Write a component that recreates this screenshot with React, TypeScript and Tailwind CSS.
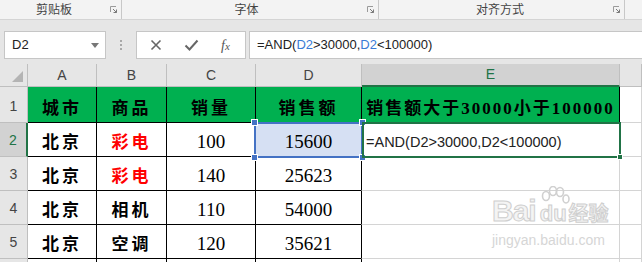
import React from "react";

const cjk = "font-['Noto_Sans_CJK_SC',sans-serif]";
const serif = "font-['Liberation_Serif','Noto_Sans_CJK_SC',serif]";

type Row = { city: string; item: string; red?: boolean; qty: string; sales: string };

const rows: Row[] = [
  { city: "北京", item: "彩电", red: true, qty: "100", sales: "15600" },
  { city: "北京", item: "彩电", red: true, qty: "140", sales: "25623" },
  { city: "北京", item: "相机", qty: "110", sales: "54000" },
  { city: "北京", item: "空调", qty: "120", sales: "35621" },
];

function Launcher() {
  return (
    <svg width="7" height="7" viewBox="0 0 7 7" className="mt-[6px]">
      <path d="M0.5 6V0.5H6" fill="none" stroke="#9a9a9a" strokeWidth="1" />
      <path d="M3 3L6.5 6.5M6.5 3.5V6.5H3.5" fill="none" stroke="#7a7a7a" strokeWidth="1" />
    </svg>
  );
}

function Ribbon() {
  return (
    <div className={`flex h-[20px] border-b border-[#d4d4d4] bg-[#f3f3f3] text-[12px] leading-[18px] text-[#444] ${cjk}`}>
      <div className="flex w-[122px] items-start border-r border-[#c8c8c8]">
        <span className="ml-[34px] w-[40px] text-center">剪贴板</span>
        <span className="ml-auto mr-[4px]"><Launcher /></span>
      </div>
      <div className="flex w-[257px] items-start border-r border-[#c8c8c8]">
        <span className="flex-1 pl-[4px] text-center">字体</span>
        <span className="mr-[4px]"><Launcher /></span>
      </div>
      <div className="flex w-[246px] items-start border-r border-[#c8c8c8]">
        <span className="flex-1 pl-[8px] text-center">对齐方式</span>
        <span className="mr-[4px]"><Launcher /></span>
      </div>
    </div>
  );
}

function FormulaBar() {
  return (
    <div className="flex h-[44px] items-start bg-[#e6e6e6] pt-[11px] font-['Liberation_Sans',sans-serif] text-[13px]">
      <div className="ml-[4px] flex h-[28px] w-[102px] items-center border border-[#c6c6c6] bg-white pl-[7px] text-[#222]">
        <span>D2</span>
        <svg width="8" height="5" viewBox="0 0 8 5" className="ml-auto mr-[6px]">
          <path d="M0 0H8L4 5Z" fill="#777" />
        </svg>
      </div>
      <div className="flex h-[28px] w-[30px] flex-col items-center justify-center gap-[2px]">
        <span className="h-[2px] w-[2px] bg-[#a8a8a8]" />
        <span className="h-[2px] w-[2px] bg-[#a8a8a8]" />
        <span className="h-[2px] w-[2px] bg-[#a8a8a8]" />
      </div>
      <div className="flex h-[28px] w-[110px] items-center border border-[#c6c6c6] bg-white text-[#666]">
        <svg width="12" height="12" viewBox="0 0 12 12" className="ml-[13px]">
          <path d="M1.5 1.5L10.5 10.5M10.5 1.5L1.5 10.5" stroke="#666" strokeWidth="1.6" />
        </svg>
        <svg width="15" height="12" viewBox="0 0 15 12" className="ml-[22px]">
          <path d="M1.5 6.5L5.5 10.5L13.5 1.5" fill="none" stroke="#666" strokeWidth="2" />
        </svg>
        <span className="ml-[22px] font-['Liberation_Serif',serif] text-[14px] italic text-[#555]">
          f<span className="text-[11px]">x</span>
        </span>
      </div>
      <div className="ml-[3px] flex h-[28px] flex-1 items-center border-y border-l border-[#c6c6c6] bg-white pl-[7px] text-[#222]">
        =AND(<span className="text-[#3a7bd5]">D2</span>&gt;30000,<span className="text-[#3a7bd5]">D2</span>&lt;100000)
      </div>
    </div>
  );
}

function Paw() {
  return (
    <svg width="34" height="34" viewBox="0 0 34 34" className="absolute left-[46px] top-[-10px]">
      <g fill="none" stroke="#d0d0d0" strokeWidth="1.6">
        <ellipse cx="8" cy="10" rx="3.5" ry="4.5" />
        <ellipse cx="15" cy="5" rx="3.5" ry="4.5" />
        <ellipse cx="22" cy="6" rx="3.5" ry="4.5" />
        <ellipse cx="28" cy="13" rx="3" ry="4" />
      </g>
    </svg>
  );
}

function Watermark() {
  const stroke = { WebkitTextStroke: "1px #cfcfcf", color: "#f4f4f4" };
  return (
    <div className="pointer-events-none absolute left-[492px] top-[196px] font-['Liberation_Sans',sans-serif] text-[#d4d4d4]">
      <div className="relative flex items-end">
        <Paw />
        <span className="text-[30px] font-bold leading-[30px] tracking-[-1px]" style={stroke}>
          Bai
        </span>
        <span className="ml-[4px] text-[22px] font-bold leading-[24px]" style={stroke}>
          du
        </span>
        <span className={`ml-[2px] text-[20px] font-bold leading-[26px] ${cjk}`} style={stroke}>
          经验
        </span>
      </div>
      <div className="mt-[6px] text-[14px] leading-[16px] text-[#d6d6d6]">jingyan.baidu.com</div>
    </div>
  );
}

const colHead = "flex items-center justify-center border-r border-b border-[#bfbfbf] text-[14px]";
const rowHead = "flex items-end justify-center border-r border-b border-[#bfbfbf] pb-[5px] text-[14px]";
const cellBase = "flex items-center justify-center border-r border-b border-black";
const headCell = `flex items-center justify-center whitespace-nowrap border-r border-b border-black bg-[#00b050] pt-[8px] text-[17px] font-bold text-black ${serif}`;
const txt = `text-[17px] font-bold tracking-[3px] pt-[6px] ${serif}`;
const num = `text-[19px] pt-[6px] text-black ${serif}`;
const grid = "border-r border-b border-[#d4d4d4] bg-white";

function Sheet() {
  return (
    <div
      className="relative grid font-['Liberation_Sans',sans-serif]"
      style={{
        gridTemplateColumns: "28px 69px 70px 89px 106px 258px 22px",
        gridTemplateRows: "23px 36px 34px 34px 34px 34px 6px",
      }}
    >
      <div className={`${colHead} relative bg-[#e6e6e6]`}>
        <svg width="11" height="11" viewBox="0 0 11 11" className="absolute bottom-[4px] right-[4px]">
          <path d="M11 0V11H0Z" fill="#b4b4b4" />
        </svg>
      </div>
      <div className={`${colHead} bg-[#e6e6e6] text-[#444]`}>A</div>
      <div className={`${colHead} bg-[#e6e6e6] text-[#444]`}>B</div>
      <div className={`${colHead} bg-[#e6e6e6] text-[#444]`}>C</div>
      <div className={`${colHead} bg-[#e6e6e6] text-[#444]`}>D</div>
      <div className="flex items-center justify-center border-r border-b-2 border-r-[#bfbfbf] border-b-[#217346] bg-[#d2d2d2] text-[14px] text-[#217346]">
        E
      </div>
      <div className={`${colHead} bg-[#e6e6e6]`} />

      <div className={`${rowHead} bg-[#e6e6e6] text-[#444]`}>1</div>
      <div className={`${headCell} tracking-[3px]`}>城市</div>
      <div className={`${headCell} tracking-[3px]`}>商品</div>
      <div className={`${headCell} tracking-[3px]`}>销量</div>
      <div className={`${headCell} tracking-[3px]`}>销售额</div>
      <div className={`${headCell} tracking-[2px]`}>销售额大于30000小于100000</div>
      <div className={grid} />

      {rows.map((r, i) => (
        <React.Fragment key={i}>
          {i === 0 ? (
            <div className="flex items-end justify-center border-r-2 border-b border-r-[#217346] border-b-[#bfbfbf] bg-[#d2d2d2] pb-[5px] text-[14px] text-[#217346]">
              2
            </div>
          ) : (
            <div className={`${rowHead} bg-[#e6e6e6] text-[#444]`}>{i + 2}</div>
          )}
          <div className={`${cellBase} bg-white`}>
            <span className={`${txt} text-black`}>{r.city}</span>
          </div>
          <div className={`${cellBase} bg-white`}>
            <span className={`${txt} ${r.red ? "text-[#ff0000]" : "text-black"}`}>{r.item}</span>
          </div>
          <div className={`${cellBase} bg-white`}>
            <span className={num}>{r.qty}</span>
          </div>
          <div className={`${cellBase} ${i === 0 ? "bg-[#d6e0f3]" : "bg-white"}`}>
            <span className={num}>{r.sales}</span>
          </div>
          {i === 0 ? (
            <div className="flex items-center whitespace-nowrap border-b border-black bg-white pl-[4px] pt-[6px] text-[14.5px] text-[#222]">
              =AND(D2&gt;30000,D2&lt;100000)
            </div>
          ) : (
            <div className="-ml-px border-r border-b border-l border-r-[#d4d4d4] border-b-[#d4d4d4] border-l-black bg-white" />
          )}
          <div className={grid} />
        </React.Fragment>
      ))}

      <div className={`${rowHead} bg-[#e6e6e6]`} />
      <div className={`${cellBase} bg-white`} />
      <div className={`${cellBase} bg-white`} />
      <div className={`${cellBase} bg-white`} />
      <div className={`${cellBase} bg-white`} />
      <div className="-ml-px border-r border-b border-l border-r-[#d4d4d4] border-b-[#d4d4d4] border-l-black bg-white" />
      <div className={grid} />

      {/* D2 selection */}
      <div className="pointer-events-none absolute left-[254px] top-[58px] h-[36px] w-[109px] border-2 border-[#4472c4]">
        <span className="absolute left-[-5px] top-[-5px] h-[7px] w-[7px] border border-white bg-[#4472c4]" />
        <span className="absolute right-[-5px] top-[-5px] h-[7px] w-[7px] border border-white bg-[#4472c4]" />
        <span className="absolute bottom-[-5px] left-[-5px] h-[7px] w-[7px] border border-white bg-[#4472c4]" />
        <span className="absolute bottom-[-5px] right-[-5px] h-[7px] w-[7px] border border-white bg-[#4472c4]" />
      </div>
      {/* E2 active cell */}
      <div className="pointer-events-none absolute left-[362px] top-[58px] h-[36px] w-[259px] border-2 border-[#217346]">
        <span className="absolute bottom-[-4px] right-[-4px] h-[6px] w-[6px] border border-white bg-[#217346]" />
      </div>
    </div>
  );
}

export default function App() {
  return (
    <div className="relative h-[262px] w-[642px] overflow-hidden bg-white">
      <Ribbon />
      <FormulaBar />
      <Sheet />
      <Watermark />
    </div>
  );
}
